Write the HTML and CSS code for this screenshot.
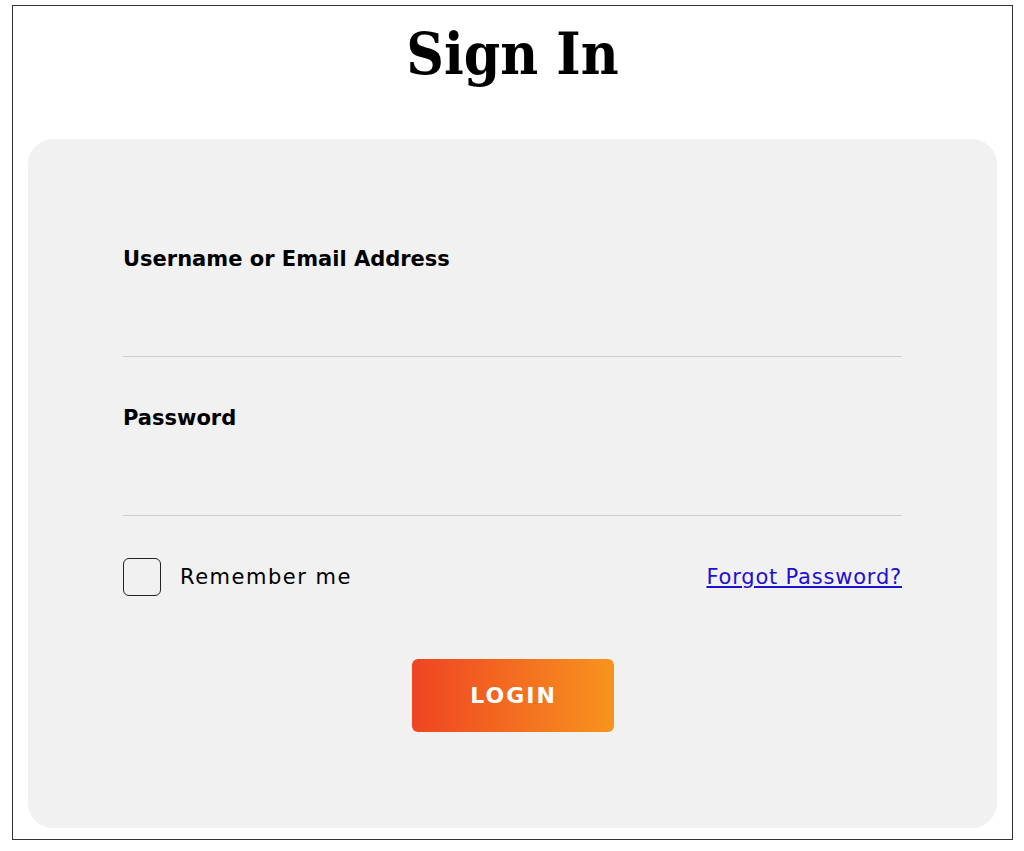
FILE: index.html
```html
<!DOCTYPE html>
<html lang="en">

<head>
    <meta charset="UTF-8">
    <meta name="viewport" content="width=device-width, initial-scale=1.0">
    <title>Sign In</title>
    <link rel="stylesheet" href="styles.css">
</head>

<body>
    <div class="frame">
        <h1 class="title">Sign In</h1>

        <form class="login-card" action="javascript:;">
            <div class="field">
                <label for="username">Username or Email Address</label>
                <input type="text" id="username" class="field-input">
            </div>
            <div class="field">
                <label for="password">Password</label>
                <input type="password" id="password" class="field-input">
            </div>

            <div class="login-options">
                <label class="remember">
                    <input type="checkbox" class="remember-box">
                    <span>Remember me</span>
                </label>
                <a href="javascript:;" class="forgot">Forgot Password?</a>
            </div>

            <div class="login-actions">
                <button type="submit" class="login-button">LOGIN</button>
            </div>
        </form>
    </div>
</body>

</html>
```

FILE: styles.css
```css
* {
    box-sizing: border-box;
}

body {
    margin: 0;
    font-family: "DejaVu Sans", sans-serif;
    color: #000;
    background: #fff;
}

.frame {
    margin: 5px 11px 0 12px;
    height: 835px;
    border: 1px solid #333;
    padding: 0 15px 11px 15px;
}

.title {
    margin: 0;
    height: 133px;
    padding-top: 12px;
    text-align: center;
    font-family: "DejaVu Serif", serif;
    font-stretch: condensed;
    font-size: 58px;
    font-weight: bold;
    line-height: 72px;
}

.login-card {
    display: flex;
    flex-direction: column;
    background: #f1f1f1;
    border-radius: 25px;
    padding: 107px 95px 96px 95px;
}

.field {
    display: flex;
    flex-direction: column;
    margin-bottom: 48px;
}

.field label {
    font-size: 21px;
    font-weight: bold;
    line-height: 27px;
}

.field-input {
    height: 84px;
    border: none;
    border-bottom: 1px solid #cdcdcd;
    background: transparent;
    outline: none;
    font-size: 16px;
}

.login-options {
    display: flex;
    align-items: center;
    justify-content: space-between;
    margin-top: -6px;
}

.remember {
    display: flex;
    align-items: center;
    gap: 19px;
    font-size: 21px;
    letter-spacing: 1.5px;
}

.remember-box {
    appearance: none;
    margin: 0;
    width: 38px;
    height: 38px;
    border: 1px solid #222;
    border-radius: 6px;
    background: transparent;
}

.forgot {
    color: #1f0fd0;
    font-size: 21px;
    letter-spacing: 0.8px;
    text-decoration: underline;
}

.login-actions {
    display: flex;
    justify-content: center;
    margin-top: 63px;
}

.login-button {
    width: 202px;
    height: 73px;
    border: none;
    border-radius: 6px;
    background: linear-gradient(to right, #ef4423, #f7941d);
    color: #fff;
    font-family: "DejaVu Sans", sans-serif;
    font-size: 22px;
    font-weight: bold;
    letter-spacing: 2px;
    text-indent: 2px;
    cursor: pointer;
}
```
